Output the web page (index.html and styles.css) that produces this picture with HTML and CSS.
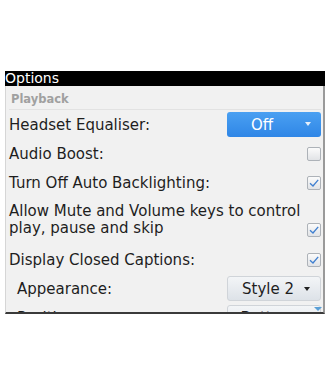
FILE: index.html
```html
<!DOCTYPE html>
<html>
<head>
<meta charset="utf-8">
<link rel="stylesheet" href="styles.css">
</head>
<body>
<div class="screen">
  <div class="titlebar">Options</div>
  <div class="panel">
    <div class="section">Playback</div>
    <div class="row">
      <span class="label">Headset Equaliser:</span>
      <div class="drop blue"><span class="val">Off</span><span class="caret"></span></div>
    </div>
    <div class="row">
      <span class="label">Audio Boost:</span>
      <span class="check"></span>
    </div>
    <div class="row">
      <span class="label">Turn Off Auto Backlighting:</span>
      <span class="check on"><svg viewBox="0 0 14 14" width="14" height="14"><path d="M3 7.2 L6 10 L11.2 3.8" fill="none" stroke="#3f7fd0" stroke-width="1.3"/></svg></span>
    </div>
    <div class="row tall">
      <span class="label">Allow Mute and Volume keys to control play, pause and skip</span>
      <span class="check on"><svg viewBox="0 0 14 14" width="14" height="14"><path d="M3 7.2 L6 10 L11.2 3.8" fill="none" stroke="#3f7fd0" stroke-width="1.3"/></svg></span>
    </div>
    <div class="row">
      <span class="label">Display Closed Captions:</span>
      <span class="check on"><svg viewBox="0 0 14 14" width="14" height="14"><path d="M3 7.2 L6 10 L11.2 3.8" fill="none" stroke="#3f7fd0" stroke-width="1.3"/></svg></span>
    </div>
    <div class="row sub">
      <span class="label">Appearance:</span>
      <div class="drop grey"><span class="val">Style 2</span><span class="caret dark"></span></div>
    </div>
    <div class="row sub">
      <span class="label">Position:</span>
      <div class="drop grey"><span class="val">Bottom</span><span class="caret dark"></span></div>
    </div>
    <span class="more"></span>
  </div>
</div>
</body>
</html>
```
FILE: styles.css
```css
html, body {
  margin: 0;
  padding: 0;
  background: #ffffff;
}
.screen {
  margin: 71px 0 0 5px;
  width: 320px;
  font-family: "DejaVu Sans", sans-serif;
}
.titlebar {
  height: 15px;
  background: #000;
  color: #fff;
  font-size: 14px;
  line-height: 15px;
}
.panel {
  position: relative;
  height: 226px;
  overflow: hidden;
  background: #f1f1f1;
  border-left: 1px solid #d6d6d6;
  border-right: 2px solid #9a9a9a;
  border-bottom: 2px solid #3a3a3a;
  padding: 0 2px 0 3px;
  width: 312px;
}
.section {
  height: 23px;
  line-height: 27px;
  font-size: 11.5px;
  font-weight: bold;
  color: #a0a0a0;
  padding-left: 2px;
  border-bottom: 1px solid #e2e2e2;
}
.row {
  display: flex;
  align-items: center;
  justify-content: space-between;
  height: 29px;
  font-size: 15px;
  color: #1e1e1e;
}
.row.tall {
  height: 48px;
  align-items: flex-end;
  padding-bottom: 8px;
  box-sizing: border-box;
}
.row.tall .label {
  line-height: 17px;
  width: 300px;
}
.row.sub .label {
  padding-left: 8px;
}
.check {
  width: 14px;
  height: 14px;
  box-sizing: border-box;
  border: 1px solid #adb2b8;
  border-radius: 2px;
  background: linear-gradient(#fbfbfb, #e1e3e6);
  display: flex;
  align-items: center;
  justify-content: center;
  flex: none;
}
.check svg {
  display: block;
  margin: -1px;
}
.drop {
  width: 94px;
  height: 25px;
  box-sizing: border-box;
  border-radius: 3px;
  display: flex;
  align-items: center;
  flex: none;
  position: relative;
}
.drop .val {
  flex: 1;
  text-align: center;
  padding-right: 12px;
  font-size: 15px;
}
.drop.blue .val {
  padding-right: 24px;
}
.drop.blue {
  background: linear-gradient(#4aa0f2, #2f86e6);
  color: #fff;
}
.drop.grey {
  background: linear-gradient(#f3f5f7, #dde2e8);
  border: 1px solid #d0d4d9;
  color: #1e1e1e;
}
.caret {
  position: absolute;
  right: 10px;
  top: 10px;
  width: 0;
  height: 0;
  border-left: 3px solid transparent;
  border-right: 3px solid transparent;
  border-top: 4px solid #e6f0fb;
}
.caret.dark {
  border-top-color: #222;
}
.more {
  position: absolute;
  right: 1px;
  bottom: 1px;
  width: 0;
  height: 0;
  border-left: 4px solid transparent;
  border-right: 4px solid transparent;
  border-top: 4px solid #5a9fd6;
}
```
